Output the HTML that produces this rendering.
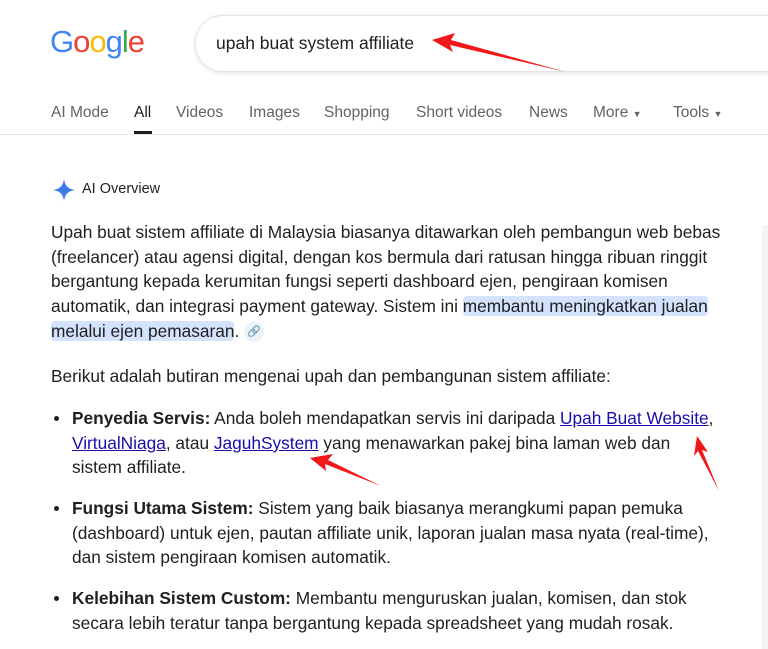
<!DOCTYPE html>
<html><head><style>
body{margin:0;width:768px;height:649px;background:#fff;font-family:"Liberation Sans",Arial,sans-serif;position:relative;overflow:hidden;color:#1f1f1f}
.abs{position:absolute;white-space:nowrap}
.logo{left:50px;top:24px;font-size:31px;letter-spacing:-1px}
.search{left:195px;top:15px;width:620px;height:55px;border-radius:28px;border:1px solid #e4e4e4;box-shadow:0 1px 5px rgba(0,0,0,.12)}
.tabs span{position:absolute;top:104px;font-size:15.5px;color:#5f6368;white-space:nowrap}
.p{position:absolute;left:51px;font-size:17.3px;line-height:24.7px;color:#1f1f1f;white-space:nowrap}
.hl{background:#d3e3fd;border-radius:4px}
a{color:#1a0dab;text-decoration:underline}
.li{position:absolute;left:72px;font-size:17.3px;line-height:24.7px;white-space:nowrap}
.li:before{content:"";position:absolute;left:-18px;top:10px;width:5px;height:5px;border-radius:50%;background:#1f1f1f}
</style></head><body>
<div class="abs logo"><span style="color:#4285f4">G</span><span style="color:#ea4335">o</span><span style="color:#fbbc05">o</span><span style="color:#4285f4">g</span><span style="color:#34a853">l</span><span style="color:#ea4335">e</span></div>
<div class="abs search"></div>
<div class="abs" style="left:216px;top:33px;font-size:17.5px;color:#1f1f1f">upah buat system affiliate</div>
<div class="tabs">
<span style="left:51px">AI Mode</span>
<span style="left:134px;color:#1f1f1f">All</span>
<span style="left:176px">Videos</span>
<span style="left:249px">Images</span>
<span style="left:324px">Shopping</span>
<span style="left:416px">Short videos</span>
<span style="left:529px">News</span>
<span style="left:593px">More <small style="font-size:9px">▼</small></span>
<span style="left:673px">Tools <small style="font-size:9px">▼</small></span>
</div>
<div class="abs" style="left:134px;top:131px;width:18px;height:3px;background:#1f1f1f"></div>
<div class="abs" style="left:0;top:134px;width:768px;height:1px;background:#e8e8e8"></div>
<div class="abs" style="left:762px;top:225px;width:6px;height:424px;background:#f3f4f6"></div>
<svg class="abs" style="left:52px;top:178px" width="24" height="24" viewBox="0 0 24 24"><path d="M12 1 C13 8 16 11 23 12 C16 13 13 16 12 23 C11 16 8 13 1 12 C8 11 11 8 12 1Z" fill="#3b7ae8"/></svg>
<div class="abs" style="left:82px;top:181px;font-size:14.5px;color:#1f1f1f">AI Overview</div>
<div class="p" style="top:220px">Upah buat sistem affiliate di Malaysia biasanya ditawarkan oleh pembangun web bebas<br>(freelancer) atau agensi digital, dengan kos bermula dari ratusan hingga ribuan ringgit<br>bergantung kepada kerumitan fungsi seperti dashboard ejen, pengiraan komisen<br>automatik, dan integrasi payment gateway. Sistem ini <span class="hl">membantu meningkatkan jualan</span><br><span class="hl">melalui ejen pemasaran</span>. <span style="display:inline-block;width:20px;height:20px;border-radius:50%;background:#eef1f7;vertical-align:middle;font-size:11px;text-align:center;line-height:20px;color:#555">🔗</span></div>
<div class="p" style="top:364px">Berikut adalah butiran mengenai upah dan pembangunan sistem affiliate:</div>
<div class="li" style="top:406px"><b>Penyedia Servis:</b> Anda boleh mendapatkan servis ini daripada <a>Upah Buat Website</a>,<br><a>VirtualNiaga</a>, atau <a>JaguhSystem</a> yang menawarkan pakej bina laman web dan<br>sistem affiliate.</div>
<div class="li" style="top:496px"><b>Fungsi Utama Sistem:</b> Sistem yang baik biasanya merangkumi papan pemuka<br>(dashboard) untuk ejen, pautan affiliate unik, laporan jualan masa nyata (real-time),<br>dan sistem pengiraan komisen automatik.</div>
<div class="li" style="top:586px"><b>Kelebihan Sistem Custom:</b> Membantu menguruskan jualan, komisen, dan stok<br>secara lebih teratur tanpa bergantung kepada spreadsheet yang mudah rosak.</div>
<svg class="abs" style="left:0;top:0" width="768" height="649">
<polygon points="432,40 455,33 451,40 566,72 450,45 453,52" fill="#f01818"/>
<polygon points="310,458 333,454 328,460 381,486 325,464 326,471" fill="#f01818"/>
<polygon points="697,436 708,452 702,450 719,491 698,451 694,456" fill="#f01818"/>
</svg>
</body></html>
